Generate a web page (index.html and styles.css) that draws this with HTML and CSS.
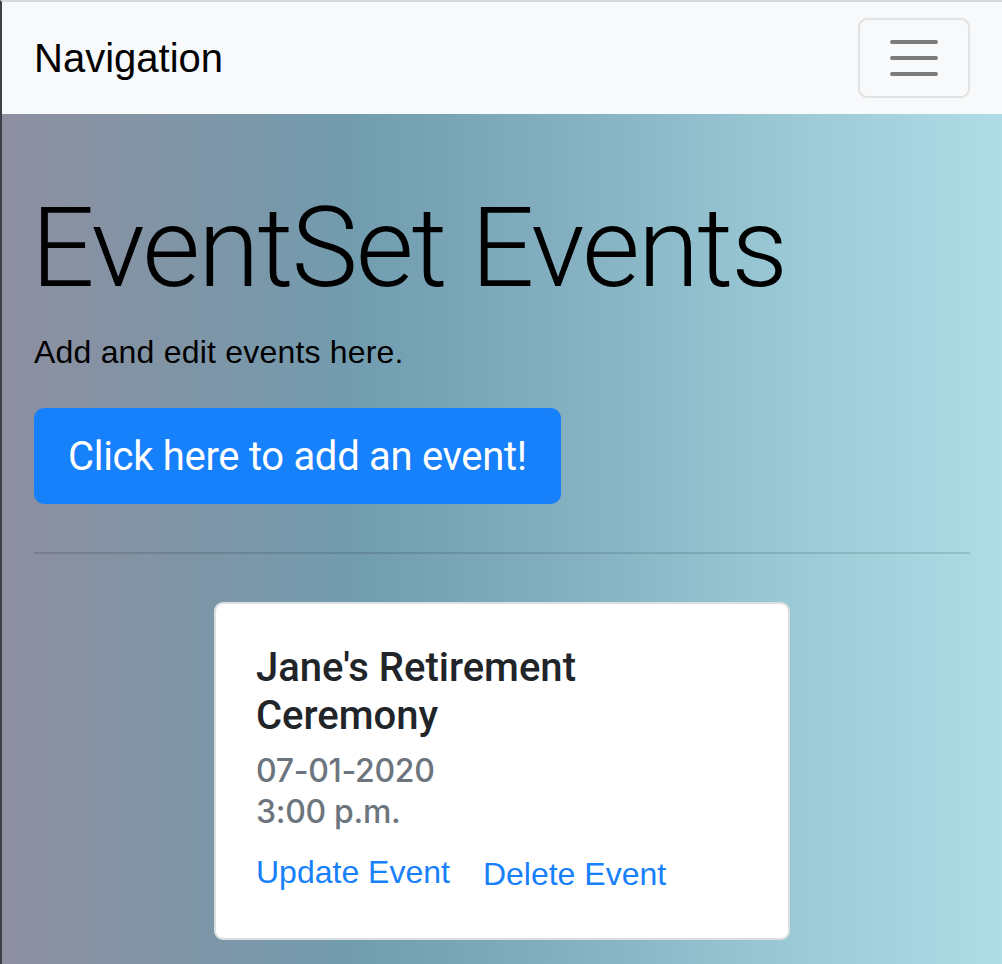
FILE: index.html
```html
<!DOCTYPE html>
<html lang="en">
<head>
<meta charset="utf-8">
<title>EventSet Events</title>
<link rel="stylesheet" href="styles.css">
</head>
<body>
<nav class="navbar">
  <span class="brand">Navigation</span>
  <button class="toggler" type="button" aria-label="Toggle navigation">
    <svg class="toggler-icon" viewBox="0 0 30 30" width="60" height="60" aria-hidden="true">
      <path d="M4 7h22M4 15h22M4 23h22" stroke="rgba(0,0,0,0.5)" stroke-width="2" stroke-linecap="round" fill="none"/>
    </svg>
  </button>
</nav>
<main class="jumbotron">
  <h1 class="display">EventSet Events</h1>
  <p class="lead">Add and edit events here.</p>
  <a class="btn-add" href="#">Click here to add an event!</a>
  <hr class="divider">
  <div class="card-row">
    <div class="card">
      <h5 class="card-title">Jane's Retirement Ceremony</h5>
      <h6 class="card-subtitle">07-01-2020<br>3:00 p.m.</h6>
      <div class="card-links">
        <a class="card-link" href="#">Update Event</a>
        <a class="card-link delete" href="#">Delete Event</a>
      </div>
    </div>
  </div>
</main>
</body>
</html>
```
FILE: styles.css
```css
html, body {
  margin: 0;
  padding: 0;
}
body {
  border-top: 2px solid #d8d9da;
  border-left: 2px solid #3b4047;
  background: #8c8fa0;
  min-height: 962px;
  box-sizing: border-box;
  display: flex;
  flex-direction: column;
}
.navbar {
  height: 112px;
  background: #f8f9fa;
  display: flex;
  align-items: center;
  justify-content: space-between;
  padding: 0 32px 0 32px;
  flex: none;
}
.brand {
  font-family: "Liberation Sans", Arial, sans-serif;
  font-size: 40px;
  color: #000;
  line-height: 48px;
}
.toggler {
  width: 112px;
  height: 80px;
  box-sizing: border-box;
  border: 2px solid #e1e2e3;
  border-radius: 9px;
  background: transparent;
  display: flex;
  align-items: center;
  justify-content: center;
  padding: 0;
}
.toggler-icon {
  display: block;
}
.jumbotron {
  flex: 1;
  background: linear-gradient(90deg, #8d8fa0 0%, #7f95a6 18%, #729caf 35.5%, #82aebf 55%, #9ccbd7 80%, #aedde6 100%);
  padding: 67px 32px 24px 32px;
}
.display {
  margin: 0 0 0 -3px;
  font-family: Roboto, "Liberation Sans", sans-serif;
  font-weight: 300;
  font-size: 112px;
  line-height: 134px;
  letter-spacing: -2.1px;
  color: #000;
}
.lead {
  margin: 13px 0 0 0;
  font-family: "Liberation Sans", Arial, sans-serif;
  font-size: 32px;
  line-height: 48px;
  letter-spacing: 0.2px;
  color: #000;
}
.btn-add {
  display: inline-block;
  margin-top: 32px;
  box-sizing: border-box;
  height: 96px;
  padding: 16px 32px;
  border: 2px solid #1780fb;
  border-radius: 10px;
  background: #1780fb;
  color: #fff;
  font-family: Roboto, "Liberation Sans", sans-serif;
  font-size: 40px;
  line-height: 62px;
  letter-spacing: -0.3px;
  text-decoration: none;
}
.divider {
  margin: 48px 0 0 0;
  border: 0;
  height: 2px;
  background: rgba(0, 0, 0, 0.12);
}
.card-row {
  display: flex;
  justify-content: center;
  margin-top: 48px;
}
.card {
  width: 576px;
  box-sizing: border-box;
  background: #fff;
  border: 2px solid #dcdfe1;
  border-radius: 9px;
  padding: 40px 40px 42px 40px;
}
.card-title {
  margin: 0;
  font-family: Roboto, "Liberation Sans", sans-serif;
  font-weight: 500;
  font-size: 40px;
  line-height: 48px;
  color: #212529;
}
.card-subtitle {
  margin: 10px 0 0 0;
  font-family: Inter, Roboto, sans-serif;
  font-weight: 500;
  font-size: 32px;
  line-height: 41px;
  letter-spacing: -0.3px;
  color: #6c757d;
}
.card-links {
  margin-top: 16px;
  display: flex;
  gap: 33px;
  font-family: "Liberation Sans", Arial, sans-serif;
  font-size: 32px;
  line-height: 48px;
}
.card-link {
  color: #1780fb;
  text-decoration: none;
}
.card-link.delete {
  position: relative;
  top: 2px;
}
```
